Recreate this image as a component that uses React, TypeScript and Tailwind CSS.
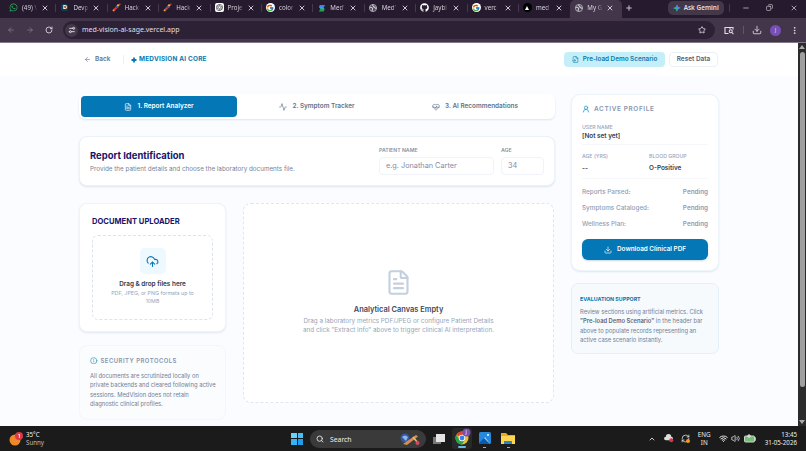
import type { ReactNode } from "react";
import {
  Activity, ArrowLeft, ArrowRight, ChevronUp, CloudUpload, Download, EllipsisVertical, FileText,
  FileInput, HeartPulse, Info, Minus, Plus, RefreshCw, RotateCw, Search, Settings2,
  Star, UserRound, Volume2, Wifi, X, Copy,
} from "lucide-react";
import { FaWhatsapp, FaGithub } from "react-icons/fa";
import { FcGoogle } from "react-icons/fc";
import { SiOpenai } from "react-icons/si";

const Hack = () => (
  <svg viewBox="0 0 10 10" className="size-[9px]">
    <path d="M1.5 8.5 5 5" stroke="#d33a3c" strokeWidth="2.4" />
    <path d="M4.6 3.4 6.8 5.6" stroke="#4a62a8" strokeWidth="1.4" />
    <circle cx="6.8" cy="2.6" r="1.3" fill="#f5b62c" />
    <circle cx="8.7" cy="1.3" r=".8" fill="#e8543c" />
    <circle cx="1.7" cy="8.3" r="1" fill="#e6a23b" />
  </svg>
);

const World = () => (
  <svg viewBox="0 0 10 10" className="size-[8px]">
    <circle cx="5" cy="5" r="4.5" fill="#4d4654" stroke="#bdb8c2" />
    <path d="M1 3.4C2.4 5 3.8 4 4.4 5.4S3.4 7.6 4 9M4.6.8c-.6 1.6 1 1.4 1 2.4s1.6.4 1.8 1.4 1 .8 1.8.4" fill="none" stroke="#d3ced8" strokeWidth="1.3" />
  </svg>
);

const Google = () => <span className="flex size-[9px] items-center justify-center rounded-full bg-white"><FcGoogle className="size-[8px]" /></span>;

const tabs: { icon: ReactNode; label: string }[] = [
  { icon: <FaWhatsapp className="size-[9px] text-[#25b35b]" />, label: "(49) \\" },
  { icon: <span className="flex size-[7px] items-center justify-center rounded-[2px] bg-[#123f50] text-[6px] font-bold text-white">D</span>, label: "Devp" },
  { icon: <Hack />, label: "Hack" },
  { icon: <Hack />, label: "Hack" },
  { icon: <span className="flex size-[9px] items-center justify-center rounded-[2px] bg-white"><SiOpenai className="size-[7px] text-[#222]" /></span>, label: "Proje" },
  { icon: <Google />, label: "color" },
  { icon: <svg viewBox="0 0 9 9" className="size-[8px]"><path d="M2 1h6L6.5 3.6H1z" fill="#3b82f6" /><path d="M1 3.4h5L7.5 6H3z" fill="#27b5a0" /><path d="M2.5 5.5h5L6.5 8.4H1z" fill="#2a9e4c" /></svg>, label: "Med\u2019" },
  { icon: <World />, label: "Med\u2019" },
  { icon: <FaGithub className="size-[9px] text-white" />, label: "Jaybl" },
  { icon: <Google />, label: "verc" },
  { icon: <span className="flex size-[9px] items-center justify-center rounded-full bg-black"><svg viewBox="0 0 6 6" className="size-[4px]"><path d="M3 0 6 6H0z" fill="#fff" /></svg></span>, label: "med" },
  { icon: <World />, label: "My G" },
];

function BrowserChrome() {
  return (
    <div className="h-[43px] border-b border-[#81798a] bg-[#43364b] font-['Noto_Sans',sans-serif] text-[#e2dde6]">
      <div className="flex h-[18px] items-center bg-[#251a2e]">
        <div className="flex h-full pl-[5px]">
          {tabs.map((t, i) => (
            <div key={i} className={`flex h-full w-[51.4px] shrink-0 items-center pb-[3px] ${i === 11 ? "rounded-t-[5px] bg-[#43364b]" : ""}`}>
              <div className="flex w-[13px] shrink-0 justify-end"><span className="flex w-[9px] justify-center">{t.icon}</span></div>
              <span className="ml-[2px] block w-[18px] shrink-0 whitespace-nowrap mask-r-from-65% pl-[2px] text-[6.2px] leading-[10px] text-[#d8d2dc]">{t.label}</span>
              <X className="ml-[3px] size-[8px] shrink-0" strokeWidth={2.6} />
              <span className={`ml-auto h-[8px] w-px ${i > 9 ? "" : "bg-[#493752]"}`} />
            </div>
          ))}
        </div>
        <Plus className="ml-[3px] mb-[3px] size-[8px]" strokeWidth={2.5} />
        <div className="ml-[35px] mb-[3px] flex h-[14px] w-[56px] items-center justify-center gap-[3px] rounded-[5px] bg-[#43374a] text-[6.4px] font-semibold">
          <svg viewBox="0 0 10 10" className="size-[8px]"><path d="M5 0Q5.5 4.5 10 5 5.5 5.5 5 10 4.5 5.5 0 5 4.5 4.5 5 0" fill="#4291f7" /><path d="M5 0Q5.5 4.5 10 5H5z" fill="#ee5347" /><path d="M0 5Q4.5 5.5 5 10V5z" fill="#35b873" /></svg>
          <span className="whitespace-nowrap">Ask Gemini</span>
        </div>
        <span className="ml-[5px] mb-[3px] h-[8px] w-px bg-[#493752]" />
        <div className="mb-[3px] flex flex-1 items-center justify-between pl-[12px] pr-[8px]">
          <Minus className="size-[8px]" /><Copy className="size-[7px] -scale-x-100" /><X className="size-[8px]" />
        </div>
      </div>
      <div className="flex h-[24px] items-center">
        <ArrowLeft className="ml-[7px] size-[8px] text-[#8d8294]" />
        <ArrowRight className="ml-[11px] size-[8px] text-[#8d8294]" />
        <RotateCw className="ml-[11px] size-[8px]" strokeWidth={2.5} />
        <div className="ml-[10px] flex h-[18px] w-[652px] items-center rounded-full bg-[#2d2235] pl-[2px] pr-[9px]">
          <span className="flex size-[13px] items-center justify-center rounded-full bg-[#43374a]"><Settings2 className="size-[8px] -scale-x-100" strokeWidth={2.8} /></span>
          <span className="ml-[4px] text-[7px]">med-vision-ai-sage.vercel.app</span>
          <Star className="ml-auto size-[8px]" strokeWidth={2.5} />
        </div>
        <svg viewBox="0 0 20 18" className="ml-[9px] h-[9px] w-[10px]" fill="none" stroke="currentColor" strokeWidth="2.2"><path d="M9 15H2V3h16v4M12 3v3" /><circle cx="13.5" cy="10.5" r="3" /><path d="m15.8 13 3 3.4" /></svg>
        <span className="ml-[9px] h-[8px] w-px bg-[#62566a]" />
        <Download className="ml-[8px] size-[10px]" />
        <span className="ml-[8px] flex size-[11px] items-center justify-center rounded-full bg-[#7650b4] text-[5.5px]">J</span>
        <EllipsisVertical className="ml-[9px] size-[9px]" strokeWidth={2.5} />
      </div>
    </div>
  );
}

function PageHeader() {
  return (
    <header className="flex h-[33px] items-center bg-white pl-[84px] pr-[80px] text-[6.45px]">
      <ArrowLeft className="size-[7px] text-[#64748b]" />
      <span className="ml-[4px] w-[27.5px] font-semibold text-[#64748b]">Back</span>
      <span className="h-[9px] w-px bg-[#edf0f5]" />
      <svg viewBox="0 0 10 10" className="ml-[7px] size-[6px]"><path d="M5 2v6M2 5h6" stroke="#0878ad" strokeWidth="3" strokeLinecap="round" /></svg>
      <span className="ml-[2.5px] font-bold tracking-[0.2px] text-[#0878ad]">MEDVISION AI CORE</span>
      <button className="ml-auto flex h-[15px] w-[101px] items-center justify-center gap-[4px] rounded-[4px] bg-[#c5eff8] text-[6.35px] font-semibold text-[#0878ad]"><FileInput className="size-[7px]" />Pre-load Demo Scenario</button>
      <button className="ml-[4px] flex h-[15px] w-[49px] items-center justify-center rounded-[4px] border border-[#edf1f6] font-semibold text-[#526176]">Reset Data</button>
    </header>
  );
}

function StepTabs() {
  return (
    <nav className="flex h-[25px] rounded-[6px] bg-white p-[2px] text-[6.4px] font-semibold text-[#64748b] shadow-[0_1px_2px_#dce5ef]">
      <div className="flex w-[156px] items-center justify-center gap-[5px] rounded-[4px] bg-[#0477b7] text-white"><FileText className="size-[8px]" />1. Report Analyzer</div>
      <div className="flex w-[160px] items-center justify-center gap-[5px]"><Activity className="size-[8px]" />2. Symptom Tracker</div>
      <div className="flex flex-1 items-center justify-center gap-[5px]"><HeartPulse className="size-[8px]" />3. AI Recommendations</div>
    </nav>
  );
}

function ReportIdentification() {
  return (
    <section className="mt-[17px] flex h-[50px] rounded-[8px] border border-[#edf2f8] bg-white pl-[10px] shadow-[0_1px_2px_#dbe4ee]">
      <div className="w-[289px] pt-[12px]">
        <h2 className="text-[9.45px] font-bold leading-[14px] text-[#18136a]">Report Identification</h2>
        <p className="mt-[1px] text-[6.3px] leading-[10px] text-[#74839a]">Provide the patient details and choose the laboratory documents file.</p>
      </div>
      <label className="w-[122px] pt-[10px] text-[5.2px] font-semibold leading-[7px] text-[#8491a8]">PATIENT NAME
        <span className="mt-[3px] flex h-[18px] w-[115px] items-center rounded-[4px] border border-[#f0f3f8] pb-px pl-[6px] text-[7.3px] font-normal text-[#858ba2]">e.g. Jonathan Carter</span>
      </label>
      <label className="pt-[10px] text-[5.2px] font-semibold leading-[7px] text-[#8491a8]">AGE
        <span className="mt-[3px] flex h-[18px] w-[43px] items-center rounded-[4px] border border-[#f0f3f8] pb-px pl-[6px] text-[7.3px] font-normal text-[#858ba2]">34</span>
      </label>
    </section>
  );
}

function Uploader() {
  return (
    <section className="h-[129px] rounded-[8px] border border-[#f0f4f9] bg-white px-[12px] pt-[12px] shadow-[0_1px_2px_#dfe7f0]">
      <h3 className="text-[7.6px] font-bold leading-[11px] text-[#18136a]">DOCUMENT UPLOADER</h3>
      <div className="mt-[8px] flex h-[85px] flex-col items-center rounded-[6px] border border-dashed border-[#dde3eb] pt-[12px]">
        <span className="flex size-[26px] items-center justify-center rounded-[5px] bg-[#edf8ff]"><CloudUpload className="size-[13px] text-[#0878ad]" /></span>
        <strong className="mt-[6px] text-[6.4px] font-semibold leading-[9px] text-[#2f3b50]">Drag &amp; drop files here</strong>
        <p className="mt-[1px] w-[90px] text-center text-[5.3px] leading-[7.8px] text-[#98a5b8]">PDF, JPEG, or PNG formats up to 10MB</p>
      </div>
    </section>
  );
}

function SecurityNote() {
  return (
    <section className="mt-[13px] h-[75px] rounded-[8px] border border-[#f4f7fa] bg-[#fafcfe] px-[10px] pt-[10px]">
      <h3 className="flex items-center gap-[3px] text-[5.9px] font-semibold leading-[9px] tracking-[0.5px] text-[#8794ad]"><Info className="size-[7.5px] text-[#258fbe]" />SECURITY PROTOCOLS</h3>
      <p className="mt-[6px] whitespace-nowrap text-[5.8px] leading-[9.4px] text-[#718096]">All documents are scrutinized locally on<br />private backends and cleared following active<br />sessions. MedVision does not retain<br />diagnostic clinical profiles.</p>
    </section>
  );
}

function EmptyCanvas() {
  return (
    <section className="flex h-[200px] w-[311px] flex-col items-center rounded-[8px] border border-dashed border-[#e0e6ee] bg-white pt-[65px]">
      <FileText className="size-[27px] text-[#c5d0df]" strokeWidth={1.9} />
      <h3 className="mt-[8px] text-[7.45px] font-semibold leading-[11px] text-[#3d4a60]">Analytical Canvas Empty</h3>
      <p className="mt-[2px] whitespace-nowrap text-center text-[6.3px] leading-[9.3px] text-[#98a5b8]">Drag a laboratory metrics PDF/JPEG or configure Patient Details<br />and click "Extract Info" above to trigger clinical AI interpretation.</p>
    </section>
  );
}

function Profile() {
  return (
    <section className="h-[177px] rounded-[9px] border border-[#edf4fa] bg-white px-[10px] pt-[9px] shadow-[0_1px_2px_#dce8f3]">
      <h3 className="flex items-center gap-[4px] text-[6.4px] font-semibold leading-[10px] tracking-[0.65px] text-[#8794ad]"><UserRound className="size-[8px] text-[#299cca]" strokeWidth={2.4} />ACTIVE PROFILE</h3>
      <div className="mt-[10px] text-[5.2px] font-medium leading-[7px] text-[#98a5b8]">USER NAME</div>
      <div className="h-[14px] border-b border-[#f5f7fa] text-[6.4px] font-semibold leading-[10px] text-[#344054]">[Not set yet]</div>
      <div className="mt-[7px] flex h-[27px] border-b border-[#f5f7fa] text-[5.2px] font-medium leading-[8px] text-[#98a5b8]">
        <div className="w-[67px]">AGE (YRS)<div className="mt-[3px] text-[6.4px] font-semibold leading-[10px] text-[#344054]">--</div></div>
        <div>BLOOD GROUP<div className="mt-[3px] text-[6.4px] font-semibold leading-[10px] text-[#344054]">O-Positive</div></div>
      </div>
      <div className="mt-[6px] text-[6.35px] leading-[15.8px] text-[#8f9db4]">
        {["Reports Parsed:", "Symptoms Cataloged:", "Wellness Plan:"].map((s) => <div key={s} className="flex justify-between"><span className="font-medium">{s}</span><span className="font-semibold">Pending</span></div>)}
      </div>
      <button className="mt-[7px] flex h-[21px] w-full items-center justify-center gap-[5px] rounded-[6px] bg-[#0477b7] text-[6.35px] font-semibold text-white shadow-[0_1px_2px_#cad7e3]"><Download className="size-[8px]" />Download Clinical PDF</button>
    </section>
  );
}

function Support() {
  return (
    <section className="mt-[12px] h-[71px] rounded-[7px] border border-[#e3f0f8] bg-[#f6fafd] px-[8px] pt-[11px]">
      <h3 className="text-[5.3px] font-bold leading-[9px] text-[#0878ad]">EVALUATION SUPPORT</h3>
      <p className="mt-[3px] whitespace-nowrap text-[5.8px] leading-[9.4px] text-[#718096]">Review sections using artificial metrics. Click<br /><b className="font-semibold text-[#59677c]">"Pre-load Demo Scenario"</b> in the header bar<br />above to populate records representing an<br />active case scenario instantly.</p>
    </section>
  );
}

function Taskbar() {
  return (
    <footer className="flex h-[25px] items-center bg-[#1b1b1b] font-['Noto_Sans',sans-serif] text-[#eee]">
      <div className="ml-[9px] flex w-[280px] items-center gap-[3px]">
        <svg viewBox="0 0 14 14" className="size-[14px]"><circle cx="6" cy="8" r="5.5" fill="#f0882b" /><circle cx="10" cy="4" r="4" fill="#dc3945" /><path d="m9.4 3 1-1v4" stroke="#fff" fill="none" strokeWidth=".8" /></svg>
        <div className="text-[6.2px] leading-[8px]">35°C<br /><span className="text-[#bbb]">Sunny</span></div>
      </div>
      <div className="ml-[2px] grid size-[12px] grid-cols-2 gap-px"><i className="bg-[#65d3fb]" /><i className="bg-[#45bff6]" /><i className="bg-[#37b4f4]" /><i className="bg-[#229be9]" /></div>
      <div className="ml-[7px] flex h-[18px] w-[116px] items-center rounded-full bg-[#3a3a3b] pl-[6px] pr-[5px]">
        <Search className="size-[8px]" strokeWidth={2.5} /><span className="ml-[6px] pt-[2px] text-[6.8px] leading-[10px]">Search</span>
        <svg viewBox="0 0 22 14" className="ml-auto h-[14px] w-[22px]"><circle cx="6" cy="6" r="4.5" fill="#315aa3" /><path d="M3 5q3-3 6 0l-2 4" fill="#90b3e8" /><path d="m4 12 13-9 2 1.5-11 8.5z" fill="#d98d53" /><path d="m14 5 5 6" stroke="#e9bd77" strokeWidth="1.6" /><circle cx="18.5" cy="11" r="2" fill="#d9475d" /></svg>
      </div>
      <svg viewBox="0 0 14 14" className="ml-[6px] size-[14px]"><rect x="1" y="5" width="8" height="7" fill="#777" /><rect x="4" y="2" width="9" height="8" fill="#e4e4e4" /></svg>
      <div className="ml-[6px] flex h-[21px] w-[20px] flex-col items-center rounded-[3px] bg-[#292929]">
        <svg viewBox="0 0 18 18" className="size-[18px]"><circle cx="9" cy="10" r="6.5" fill="#eabf29" /><path d="M9 10 3.4 6.7A6.5 6.5 0 0 1 14.6 6.7H9z" fill="#df4337" /><path d="M3.4 6.7A6.5 6.5 0 0 0 8.8 16.5L12 11.5 9 10 6 11z" fill="#27a24b" /><circle cx="9" cy="10" r="3.2" fill="#fff" /><circle cx="9" cy="10" r="2.4" fill="#3981e9" /><circle cx="13.5" cy="4.5" r="4" fill="#7650b4" /><text x="12.5" y="6.4" fontSize="5" fill="#fff">J</text></svg>
        <span className="h-[2px] w-[8px] rounded-full bg-[#66bde9]" />
      </div>
      <div className="ml-[6px] flex w-[13px] flex-col items-center pt-[3px]"><svg viewBox="0 0 12 12" className="size-[12px]"><rect width="12" height="12" rx="1.5" fill="#2689dc" /><path d="m1 12 5-7 5 7z" fill="#a4d8fa" /><path d="M0 11 5 6l6 6H1z" fill="#075bae" /><circle cx="9" cy="3" r="1" fill="#fff" /></svg><span className="mt-[3px] h-px w-[3px] bg-[#aaa]" /></div>
      <div className="ml-[10px] flex w-[14px] flex-col items-center pt-[3px]"><svg viewBox="0 0 14 12" className="h-[12px] w-[14px]"><path d="M0 1h5l2 2h7v9H0z" fill="#e8ac22" /><path d="M0 4h14v8H0z" fill="#ffd451" /><path d="M3 9h8v3H3z" fill="#2c85c7" /></svg><span className="mt-[3px] h-px w-[3px] bg-[#aaa]" /></div>
      <div className="ml-auto flex items-center pr-[9px]">
        <ChevronUp className="size-[8px]" strokeWidth={2.5} />
        <svg viewBox="0 0 11 10" className="ml-[8px] h-[9px] w-[10px]"><path d="M2 7a2 2 0 0 1 0-4 3 3 0 0 1 6 0 2 2 0 0 1 0 4z" fill="#ddd" /><circle cx="8" cy="7" r="2.3" fill="#d73548" /></svg>
        <span className="relative ml-[7px]"><RefreshCw className="size-[9px]" /><i className="absolute bottom-0 right-0 size-[4px] rounded-full bg-[#f59e1b]" /></span>
        <span className="ml-[8px] text-center text-[6.3px] leading-[8px]">ENG<br />IN</span>
        <Wifi className="ml-[8px] size-[9px]" strokeWidth={2.6} /><Volume2 className="ml-[3px] size-[9px]" />
        <svg viewBox="0 0 12 9" className="ml-[4px] h-[9px] w-[12px]"><rect x=".5" y="2" width="10" height="6" rx="1" fill="#76bd79" stroke="#c9d7c9" /><path d="M11 4h1v2h-1M5 0v4m-2-2h4" stroke="#eee" /></svg>
        <span className="ml-[9px] text-right text-[6.2px] leading-[8px]">13:45<br />31-05-2026</span>
      </div>
    </footer>
  );
}

export default function App() {
  return (
    <div className="flex h-[451px] w-[806px] flex-col overflow-hidden bg-[#fafcff] font-['Inter',sans-serif]">
      <BrowserChrome />
      <div className="flex h-[383px]">
        <div className="min-w-0 flex-1">
          <PageHeader />
          <main className="flex gap-[16px] pl-[79px] pt-[18px]">
            <div className="w-[476px]">
              <StepTabs /><ReportIdentification />
              <div className="mt-[17px] flex gap-[17px]"><div className="w-[147px]"><Uploader /><SecurityNote /></div><EmptyCanvas /></div>
            </div>
            <aside className="w-[148px]"><Profile /><Support /></aside>
          </main>
        </div>
        <div className="flex w-[8px] flex-col items-center bg-[#2b2b2b] py-[2px]">
          <svg viewBox="0 0 6 4" className="h-[4px] w-[6px]"><path d="M3 0 6 4H0z" fill="#aaa" /></svg>
          <span className="mt-[3px] h-[335px] w-[5px] rounded-full bg-[#9f9f9f]" />
          <svg viewBox="0 0 6 4" className="mt-auto h-[4px] w-[6px]"><path d="M3 4 6 0H0z" fill="#aaa" /></svg>
        </div>
      </div>
      <Taskbar />
    </div>
  );
}
